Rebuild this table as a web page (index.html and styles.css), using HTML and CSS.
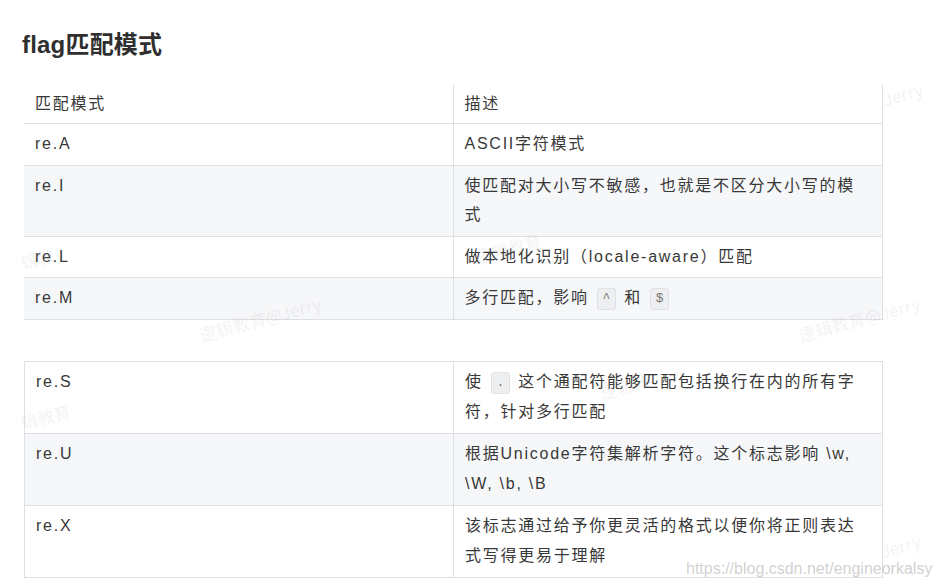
FILE: index.html
```html
<!DOCTYPE html>
<html lang="zh">
<head>
<meta charset="utf-8">
<title>flag匹配模式</title>
<link rel="stylesheet" href="styles.css">
</head>
<body>
<div class="page">
  <h2 class="title">flag匹配模式</h2>
  <table class="tbl tbl-top">
    <colgroup><col class="c1"><col class="c2"></colgroup>
    <tr class="head"><td>匹配模式</td><td>描述</td></tr>
    <tr><td>re.A</td><td>ASCII字符模式</td></tr>
    <tr class="alt"><td>re.I</td><td>使匹配对大小写不敏感，也就是不区分大小写的模式</td></tr>
    <tr><td>re.L</td><td>做本地化识别（locale-aware）匹配</td></tr>
    <tr class="alt"><td>re.M</td><td>多行匹配，影响 <code class="code">^</code> 和 <code class="code">$</code></td></tr>
  </table>
  <table class="tbl tbl-bottom">
    <colgroup><col class="c1"><col class="c2"></colgroup>
    <tr><td>re.S</td><td>使 <code class="code">.</code> 这个通配符能够匹配包括换行在内的所有字符，针对多行匹配</td></tr>
    <tr class="alt"><td>re.U</td><td>根据Unicode字符集解析字符。这个标志影响 \w, \W, \b, \B</td></tr>
    <tr><td>re.X</td><td>该标志通过给予你更灵活的格式以便你将正则表达式写得更易于理解</td></tr>
  </table>

  <span class="wm wm1">Jerry</span>
  <span class="wm wm2">逻辑教育@Jerry</span>
  <span class="wm wm3">逻辑教育@Jerry</span>
  <span class="wm wm4">辑教</span>
  <span class="wm wm5">辑教育</span>
  <span class="wm wm6">逻辑教</span>
  <span class="wm wm7">逻辑教育</span>
  <span class="wm wm8">Jerry</span>
  <span class="url">https://blog.csdn.net/engineorkalsy</span>
</div>
</body>
</html>
```

FILE: styles.css
```css
html, body {
  margin: 0;
  padding: 0;
  background: #ffffff;
}
.page {
  position: relative;
  width: 940px;
  height: 588px;
  overflow: hidden;
  padding: 29px 0 0 24px;
  box-sizing: border-box;
  font-family: "Liberation Sans", "Noto Sans CJK SC", sans-serif;
  color: #383838;
}
.title {
  margin: 0 0 23px -2px;
  font-size: 24px;
  line-height: 32px;
  font-weight: bold;
  color: #2f2f2f;
  letter-spacing: 0.2px;
}
.tbl {
  border-collapse: collapse;
  table-layout: fixed;
  font-size: 16px;
  letter-spacing: 1.75px;
  line-height: 29.5px;
}
.tbl col.c1 { width: 429px; }
.tbl col.c2 { width: 429px; }
.tbl td {
  padding: 5px 17px 6px 11px;
  vertical-align: top;
  border-bottom: 1px solid #dedfe2;
  border-right: 1px solid #dedfe2;
  background: #ffffff;
}
.tbl tr.head td {
  padding-bottom: 4.5px;
}
.tbl tr.alt td {
  background: #f6f7f9;
}
.tbl-top {
  margin-bottom: 41px;
}
.tbl-bottom {
  border-top: 1px solid #dedfe2;
  border-left: 1px solid #dedfe2;
  line-height: 29.75px;
}
.tbl-bottom td {
  padding-top: 5.5px;
}
.code {
  font-family: "Liberation Mono", monospace;
  font-size: 13px;
  letter-spacing: 0;
  display: inline-block;
  min-width: 17px;
  height: 20px;
  line-height: 20px;
  text-align: center;
  background: #eeeff1;
  border: 1px solid #e0e1e4;
  border-radius: 3px;
  color: #777;
  vertical-align: 1px;
  margin: 0 2px;
}
.wm {
  position: absolute;
  font-family: "Noto Sans CJK SC", sans-serif;
  font-size: 17px;
  color: rgba(160, 160, 160, 0.14);
  transform: rotate(-15deg);
  transform-origin: left bottom;
  white-space: nowrap;
  pointer-events: none;
}
.wm1 { left: 886px; top: 86px; }
.wm2 { left: 203px; top: 322px; }
.wm3 { left: 802px; top: 322px; }
.wm4 { left: 24px; top: 250px; }
.wm5 { left: 24px; top: 410px; }
.wm6 { left: 603px; top: 380px; }
.wm7 { left: 478px; top: 244px; }
.wm8 { left: 884px; top: 538px; }
.url {
  position: absolute;
  left: 686px;
  top: 560px;
  font-family: "Liberation Sans", sans-serif;
  font-size: 16px;
  color: rgba(170, 170, 170, 0.55);
  white-space: nowrap;
}
```
